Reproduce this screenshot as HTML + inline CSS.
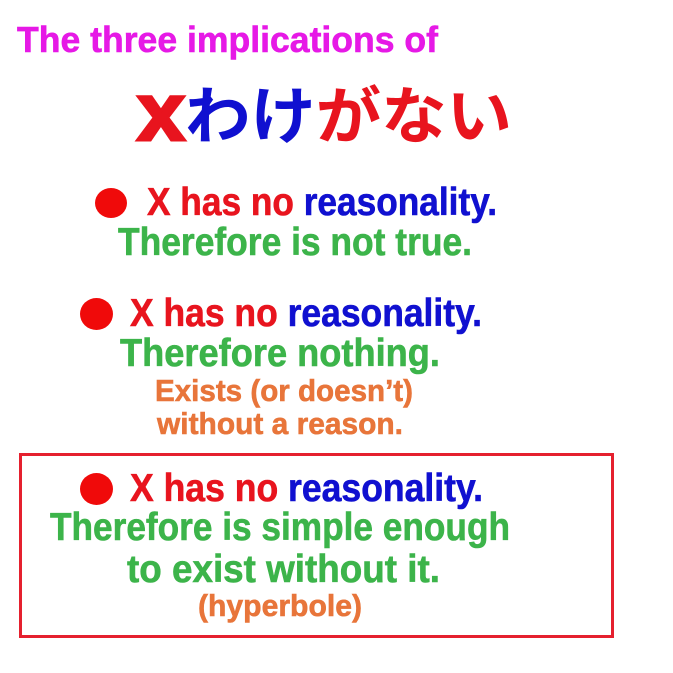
<!DOCTYPE html>
<html><head><meta charset="utf-8">
<style>
body{margin:0;width:673px;height:673px;background:#fff;position:relative;overflow:hidden;font-family:"Liberation Sans Narrow","Liberation Sans","Noto Sans CJK JP",sans-serif;font-weight:bold}
.l{position:absolute;white-space:nowrap;transform-origin:0 0;line-height:1;-webkit-text-stroke:0.6px currentColor}
.r{color:#e8141e}.b{color:#1010d0}.g{color:#3cb44a}.o{color:#e8753a}.m{color:#e619e6}
.dot{position:absolute;border-radius:50%;background:#f00a0a}
.box{position:absolute;left:19px;top:453px;width:589px;height:179px;border:3px solid #e5202e}
</style></head><body>
<div class="l m" style="left:17px;top:22px;font-size:36px" data-w="421">The three implications of</div>
<div class="l" style="left:137px;top:80px;font-size:62px;font-family:'Noto Sans CJK JP',sans-serif;font-weight:bold;-webkit-text-stroke:0" data-w="375"><span class="r" style="font-family:'Liberation Sans',sans-serif;font-weight:900;font-size:82px;line-height:0;-webkit-text-stroke:3px #e8141e;vertical-align:-2px">x</span><span class="b">わけ</span><span class="r">がない</span></div>

<div class="dot" style="left:95px;top:188px;width:32px;height:30px"></div>
<div class="l" style="left:147px;top:183px;font-size:39px" data-w="350"><span class="r">X has no </span><span class="b">reasonality.</span></div>
<div class="l g" style="left:118px;top:223px;font-size:39px" data-w="354">Therefore is not true.</div>

<div class="dot" style="left:80px;top:298px;width:33px;height:32px"></div>
<div class="l" style="left:130px;top:294px;font-size:39px" data-w="352"><span class="r">X has no </span><span class="b">reasonality.</span></div>
<div class="l g" style="left:120px;top:334px;font-size:39px" data-w="320">Therefore nothing.</div>
<div class="l o" style="left:155px;top:375px;font-size:31px" data-w="258">Exists (or doesn’t)</div>
<div class="l o" style="left:157px;top:408px;font-size:31px" data-w="246">without a reason.</div>

<div class="box"></div>
<div class="dot" style="left:80px;top:473px;width:33px;height:32px"></div>
<div class="l" style="left:130px;top:469px;font-size:39px" data-w="353"><span class="r">X has no </span><span class="b">reasonality.</span></div>
<div class="l g" style="left:50px;top:508px;font-size:39px" data-w="460">Therefore is simple enough</div>
<div class="l g" style="left:127px;top:550px;font-size:39px" data-w="313">to exist without it.</div>
<div class="l o" style="left:198px;top:590px;font-size:31px" data-w="164">(hyperbole)</div>
<script>
document.querySelectorAll('.l').forEach(function(e){var w=+e.getAttribute('data-w');var a=e.getBoundingClientRect().width;if(a>0)e.style.transform='scaleX('+(w/a)+')';});
</script>
</body></html>
